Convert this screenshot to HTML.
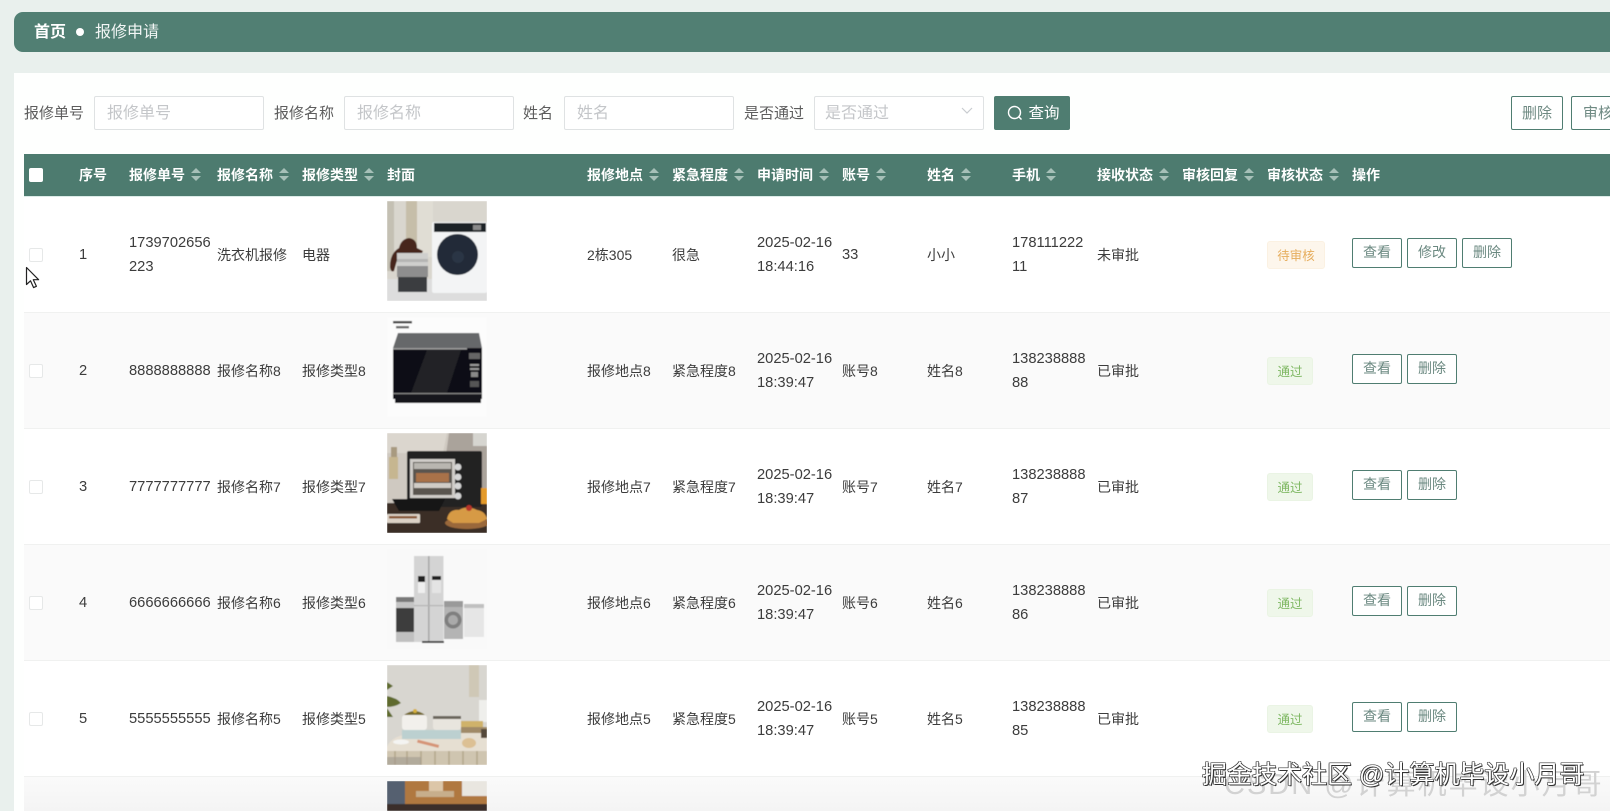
<!DOCTYPE html>
<html lang="zh">
<head>
<meta charset="utf-8">
<title>报修申请</title>
<style>
html,body{margin:0;padding:0;width:1610px;height:811px;overflow:hidden;background:#e9f0ed}
body{position:relative;font-family:"Liberation Sans","Noto Sans CJK SC",sans-serif;color:#333}
.abs,.bc,.panel,.lb,.ip,.btn,.thead,.row,.th,.td,.op,.tag,.cb,.img{position:absolute;box-sizing:border-box}
.bc{left:14px;top:12px;width:1596px;height:40px;background:#517f73;border-radius:9px 0 0 9px;color:#fff}
.bc b{position:absolute;left:20px;top:10px;font-size:16px;line-height:22px}
.bc i{position:absolute;left:62px;top:16px;width:8px;height:8px;border-radius:50%;background:#fff}
.bc span{position:absolute;left:81px;top:10px;font-size:16px;line-height:22px;color:#f2f6f5}
.panel{left:14px;top:73px;width:1596px;height:738px;background:#fefffe}
.lb{top:102px;height:24px;line-height:24px;font-size:15px;color:#5d5d5d;white-space:nowrap}
.ip{top:96px;height:34px;width:170px;border:1px solid #dfe2e3;background:#fff;border-radius:2px;color:#c4c6c9;font-size:16px;line-height:33px;padding-left:12px;white-space:nowrap}
.btn{top:96px;height:34px;border:1px solid #4f7d71;border-radius:2px;background:#fff;color:#6f8a83;font-size:15px;line-height:33px;text-align:center;overflow:hidden;white-space:nowrap}
.thead{left:24px;top:154px;width:1586px;height:43px;background:#4d7b6f;border-bottom:1px solid #dcebe8}
.th{top:0;height:42px;line-height:42px;color:#fff;font-size:14px;font-weight:bold;white-space:nowrap;margin-left:-24px}
.th u{display:inline-block;position:relative;width:10px;height:13px;margin-left:6px;vertical-align:-1px;text-decoration:none}
.th u:before,.th u:after{content:"";position:absolute;left:0;border-left:5px solid transparent;border-right:5px solid transparent}
.th u:before{top:0;border-bottom:5px solid #a6c0b8}
.th u:after{bottom:0;border-top:5px solid #a6c0b8}
.hcb{position:absolute;left:5px;top:14px;width:14px;height:14px;background:#fff;border-radius:2px}
.row{left:24px;width:1586px;height:116px;background:#fff;border-bottom:1px solid #f0f1f0}
.row.e{background:#fafafa}
.td{top:1px;height:116px;display:flex;align-items:center;font-size:14px;line-height:23.6px;color:#3c3c3c;white-space:nowrap;margin-left:-24px}
.n{font-size:14.7px}
.cb{left:5px;top:51px;width:14px;height:14px;border:1px solid #e6e8e8;border-radius:2px;background:#fff}
.op{top:41px;width:50px;height:30px;border:1px solid #4f7d71;border-radius:2px;background:#fff;font-size:14px;line-height:27px;text-align:center;color:#6b8981;margin-left:-24px}
.tag{top:44px;height:28px;margin-left:-24px;left:1267px;border-radius:3px;font-size:12.5px;line-height:28px;text-align:center}
.tag.g{width:46px;background:#eff7ea;border:1px solid #eaf4e4;color:#7fb863}
.tag.o{width:58px;background:#fdf6ec;border:1px solid #fbf1e2;color:#e6ad5c}
.img{left:387px;width:100px;height:100px;overflow:hidden}
.img svg{display:block;width:100px;height:100px}
.wm{position:absolute;white-space:nowrap}
</style>
</head>
<body>
<div class="bc"><b>首页</b><i></i><span>报修申请</span></div>
<div class="panel"></div>

<div class="lb" style="left:24px">报修单号</div>
<div class="ip" style="left:94px">报修单号</div>
<div class="lb" style="left:274px">报修名称</div>
<div class="ip" style="left:344px">报修名称</div>
<div class="lb" style="left:523px">姓名</div>
<div class="ip" style="left:564px">姓名</div>
<div class="lb" style="left:744px">是否通过</div>
<div class="ip" style="left:814px;padding-left:10px">是否通过
<svg style="position:absolute;right:10px;top:10px" width="12" height="8" viewBox="0 0 12 8"><path d="M1 1l5 5 5-5" fill="none" stroke="#c9ccd0" stroke-width="1.2"/></svg></div>
<div class="btn" style="left:994px;width:76px;background:#4f7d71;color:#fff;padding-left:24px;font-size:15.5px">查询
<svg style="position:absolute;left:12px;top:8px" width="16" height="16" viewBox="0 0 16 16"><circle cx="7.5" cy="7.5" r="6" fill="none" stroke="#fff" stroke-width="1.4"/><path d="M12 12l2.5 2.5" stroke="#fff" stroke-width="1.4"/></svg></div>
<div class="btn" style="left:1511px;width:52px">删除</div>
<div class="btn" style="left:1571px;width:39px;border-right:0;border-radius:2px 0 0 2px;text-align:left;padding-left:11px">审核</div>

<div class="thead">
  <div class="hcb"></div>
  <div class="th" style="left:79px">序号</div>
  <div class="th" style="left:129px">报修单号<u></u></div>
  <div class="th" style="left:217px">报修名称<u></u></div>
  <div class="th" style="left:302px">报修类型<u></u></div>
  <div class="th" style="left:387px">封面</div>
  <div class="th" style="left:587px">报修地点<u></u></div>
  <div class="th" style="left:672px">紧急程度<u></u></div>
  <div class="th" style="left:757px">申请时间<u></u></div>
  <div class="th" style="left:842px">账号<u></u></div>
  <div class="th" style="left:927px">姓名<u></u></div>
  <div class="th" style="left:1012px">手机<u></u></div>
  <div class="th" style="left:1097px">接收状态<u></u></div>
  <div class="th" style="left:1182px">审核回复<u></u></div>
  <div class="th" style="left:1267px">审核状态<u></u></div>
  <div class="th" style="left:1352px">操作</div>
</div>

<!-- row 1 -->
<div class="row" style="top:197px">
  <div class="cb"></div>
  <div class="td n" style="left:79px">1</div>
  <div class="td n" style="left:129px">1739702656<br>223</div>
  <div class="td" style="left:217px">洗衣机报修</div>
  <div class="td" style="left:302px">电器</div>
  <div class="td" style="left:587px">2栋305</div>
  <div class="td" style="left:672px">很急</div>
  <div class="td n" style="left:757px">2025-02-16<br>18:44:16</div>
  <div class="td n" style="left:842px">33</div>
  <div class="td" style="left:927px">小小</div>
  <div class="td n" style="left:1012px">178111222<br>11</div>
  <div class="td" style="left:1097px">未审批</div>
  <div class="tag o">待审核</div>
  <div class="op" style="left:1352px">查看</div>
  <div class="op" style="left:1407px">修改</div>
  <div class="op" style="left:1462px">删除</div>
</div>
<!-- row 2 -->
<div class="row e" style="top:313px">
  <div class="cb"></div>
  <div class="td n" style="left:79px">2</div>
  <div class="td n" style="left:129px">8888888888</div>
  <div class="td" style="left:217px">报修名称8</div>
  <div class="td" style="left:302px">报修类型8</div>
  <div class="td" style="left:587px">报修地点8</div>
  <div class="td" style="left:672px">紧急程度8</div>
  <div class="td n" style="left:757px">2025-02-16<br>18:39:47</div>
  <div class="td" style="left:842px">账号8</div>
  <div class="td" style="left:927px">姓名8</div>
  <div class="td n" style="left:1012px">138238888<br>88</div>
  <div class="td" style="left:1097px">已审批</div>
  <div class="tag g">通过</div>
  <div class="op" style="left:1352px">查看</div>
  <div class="op" style="left:1407px">删除</div>
</div>
<!-- row 3 -->
<div class="row" style="top:429px">
  <div class="cb"></div>
  <div class="td n" style="left:79px">3</div>
  <div class="td n" style="left:129px">7777777777</div>
  <div class="td" style="left:217px">报修名称7</div>
  <div class="td" style="left:302px">报修类型7</div>
  <div class="td" style="left:587px">报修地点7</div>
  <div class="td" style="left:672px">紧急程度7</div>
  <div class="td n" style="left:757px">2025-02-16<br>18:39:47</div>
  <div class="td" style="left:842px">账号7</div>
  <div class="td" style="left:927px">姓名7</div>
  <div class="td n" style="left:1012px">138238888<br>87</div>
  <div class="td" style="left:1097px">已审批</div>
  <div class="tag g">通过</div>
  <div class="op" style="left:1352px">查看</div>
  <div class="op" style="left:1407px">删除</div>
</div>
<!-- row 4 -->
<div class="row e" style="top:545px">
  <div class="cb"></div>
  <div class="td n" style="left:79px">4</div>
  <div class="td n" style="left:129px">6666666666</div>
  <div class="td" style="left:217px">报修名称6</div>
  <div class="td" style="left:302px">报修类型6</div>
  <div class="td" style="left:587px">报修地点6</div>
  <div class="td" style="left:672px">紧急程度6</div>
  <div class="td n" style="left:757px">2025-02-16<br>18:39:47</div>
  <div class="td" style="left:842px">账号6</div>
  <div class="td" style="left:927px">姓名6</div>
  <div class="td n" style="left:1012px">138238888<br>86</div>
  <div class="td" style="left:1097px">已审批</div>
  <div class="tag g">通过</div>
  <div class="op" style="left:1352px">查看</div>
  <div class="op" style="left:1407px">删除</div>
</div>
<!-- row 5 -->
<div class="row" style="top:661px">
  <div class="cb"></div>
  <div class="td n" style="left:79px">5</div>
  <div class="td n" style="left:129px">5555555555</div>
  <div class="td" style="left:217px">报修名称5</div>
  <div class="td" style="left:302px">报修类型5</div>
  <div class="td" style="left:587px">报修地点5</div>
  <div class="td" style="left:672px">紧急程度5</div>
  <div class="td n" style="left:757px">2025-02-16<br>18:39:47</div>
  <div class="td" style="left:842px">账号5</div>
  <div class="td" style="left:927px">姓名5</div>
  <div class="td n" style="left:1012px">138238888<br>85</div>
  <div class="td" style="left:1097px">已审批</div>
  <div class="tag g">通过</div>
  <div class="op" style="left:1352px">查看</div>
  <div class="op" style="left:1407px">删除</div>
</div>
<!-- row 6 -->
<div class="row e" style="top:777px;height:34px;background:linear-gradient(#fafafa,#f4f4f4);border-bottom:0"></div>

<svg width="0" height="0" style="position:absolute;left:0;top:0"><filter id="s"><feGaussianBlur stdDeviation="0.6"/></filter></svg>

<!-- image 1 -->
<div class="img" style="top:201px"><svg viewBox="0 0 100 100"><g filter="url(#s)">
<rect width="100" height="100" fill="#d9d6ce"/>
<rect x="19" width="11" height="52" fill="#c6bea9"/><rect x="30" width="16" height="56" fill="#e0ddd4"/><rect x="0" width="7" height="70" fill="#c4c0b3"/>
<rect y="78" width="100" height="22" fill="#dddddd"/>
<path d="M3 66Q3 52 12 47Q14 38 22 37Q30 38 30 47L36 50L34 54L11 56L7 70Q4 72 3 66Z" fill="#47281b"/>
<rect x="10" y="52" width="31" height="13" fill="#cfcfcd"/><rect x="10" y="58" width="31" height="3" fill="#b5b5b3"/>
<rect x="10" y="65" width="31" height="11" fill="#8e8e8e"/><rect x="11" y="76" width="29" height="15" fill="#3a3d40"/>
<rect x="45" y="21" width="55" height="71" rx="2" fill="#f3f4f5"/>
<rect x="47" y="22" width="52" height="9" fill="#1e2125"/><rect x="86" y="24" width="8" height="5" fill="#8a8a8a"/>
<circle cx="70.5" cy="53.5" r="20.5" fill="#222b38"/><circle cx="71" cy="56" r="6" fill="#2c3644"/>
</g></svg></div>

<!-- image 2 -->
<div class="img" style="top:317px"><svg viewBox="0 0 100 100"><g filter="url(#s)">
<rect width="100" height="100" fill="#fcfcfc"/>
<path d="M6 31L11 16H92L95 31Z" fill="#66676a"/>
<rect x="6" y="31" width="89" height="51" fill="#0f0f12"/>
<path d="M40 33H74L60 76H24Z" fill="#232428"/>
<rect x="6" y="31" width="74" height="1.6" fill="#9a9a9a"/>
<rect x="6" y="76" width="89" height="1.2" fill="#888"/>
<rect x="8" y="78" width="86" height="8" fill="#18181b"/>
<rect x="82" y="36" width="11" height="6" fill="#666"/><rect x="83" y="47" width="9" height="2" fill="#999"/><rect x="83" y="51" width="9" height="2" fill="#999"/><rect x="84" y="55" width="7" height="5" fill="#888"/><rect x="83" y="64" width="9" height="6" fill="#555"/>
<rect x="6" y="4" width="19" height="2.4" fill="#444"/><rect x="9" y="9" width="13" height="2.4" fill="#666"/>
</g></svg></div>

<!-- image 3 -->
<div class="img" style="top:433px"><svg viewBox="0 0 100 100"><g filter="url(#s)">
<rect width="100" height="72" fill="#cfc9c1"/>
<path d="M62 0H100V72H52Z" fill="#aaa39b"/><path d="M0 0H60L56 20H0Z" fill="#dbd6ce"/>
<rect x="86" y="0" width="14" height="13" fill="#d6d5d0"/>
<rect x="4" y="14" width="6" height="10" fill="#a89a80"/><rect x="2" y="24" width="9" height="22" fill="#c6b690"/>
<rect y="70" width="100" height="30" fill="#3b2e28"/>
<rect x="20" y="18" width="75" height="56" rx="2" fill="#232324"/>
<rect x="23" y="26" width="45" height="39" fill="#cfccc8"/><rect x="26" y="29" width="39" height="33" fill="#5a5550"/>
<rect x="27" y="30" width="37" height="6" fill="#b9b6b0"/>
<rect x="29" y="40" width="33" height="9" fill="#a9724a"/><rect x="27" y="50" width="37" height="5" fill="#d0ccc6"/>
<circle cx="71" cy="34" r="3.4" fill="#d6d6d6"/><circle cx="71" cy="44" r="3.4" fill="#d6d6d6"/><circle cx="71" cy="53" r="3.4" fill="#d6d6d6"/><circle cx="71" cy="63" r="3.4" fill="#d6d6d6"/>
<path d="M5 66H58L52 78H12Z" fill="#141414"/>
<rect x="94" y="55" width="6" height="16" fill="#e49a2c"/>
<rect x="0" y="81" width="33" height="9" rx="1" fill="#dcd2c6"/><rect x="2" y="83" width="28" height="2.5" fill="#8a5a38"/>
<ellipse cx="80" cy="90" rx="22" ry="6" fill="#9a683a"/>
<path d="M60 86Q62 76 72 77Q80 72 90 77Q98 78 100 86L92 90H66Z" fill="#d69a45"/>
<circle cx="82" cy="75" r="3" fill="#b8342a"/>
</g></svg></div>

<!-- image 4 -->
<div class="img" style="top:549px"><svg viewBox="0 0 100 100"><g filter="url(#s)">
<rect width="100" height="100" fill="#f9f9f9"/>
<rect x="27" y="7" width="29.5" height="86" fill="#d4d4d4"/><rect x="41" y="7" width="1.6" height="86" fill="#a8a8a8"/>
<rect x="27" y="56" width="29.5" height="1.2" fill="#b4b4b4"/>
<rect x="31" y="27" width="7" height="6" fill="#222"/><rect x="31" y="33" width="7" height="11" fill="#efefef"/>
<rect x="45" y="27" width="9" height="4" fill="#222"/><rect x="45" y="31" width="9" height="13" fill="#e4e4e4"/>
<rect x="9" y="48" width="18" height="5" fill="#7a7a7a"/><rect x="9" y="53" width="18" height="6" fill="#c4c4c4"/><rect x="9" y="59" width="18" height="24" fill="#3c3c3e"/><rect x="9" y="83" width="18" height="10" fill="#c0c0c0"/>
<rect x="57" y="52" width="19" height="38" fill="#b4b4b4"/><rect x="57" y="52" width="19" height="6" fill="#9a9a9a"/><circle cx="66" cy="71" r="8.5" fill="#7f7f7f"/><circle cx="66" cy="71" r="5" fill="#aaa"/>
<rect x="77" y="55" width="20" height="33" fill="#e6e6e6"/><rect x="77" y="55" width="20" height="4" fill="#c0c0c0"/>
<rect x="35" y="92" width="22" height="2" fill="#3a3a3a"/>
</g></svg></div>

<!-- image 5 -->
<div class="img" style="top:665px"><svg viewBox="0 0 100 100"><g filter="url(#s)">
<rect width="100" height="100" fill="#d8d6d0"/>
<rect x="82" y="0" width="10" height="32" fill="#cfc8b6"/>
<rect x="92" y="35" width="8" height="22" fill="#efefec"/>
<path d="M0 17L6 21L0 25ZM0 31Q10 33 14 38Q8 42 0 42ZM0 43L6 52L0 52Z" fill="#5e6b2e"/>
<path d="M0 82Q4 70 28 68H100V100H0Z" fill="#e6dfd2"/>
<rect y="86" width="100" height="14" fill="#cfc5b0"/>
<path d="M8 86v14M20 86v14M34 86v14M48 86v14M62 86v14M76 86v14M90 86v14" stroke="#b5a98f" stroke-width="1.6"/>
<rect x="15" y="50" width="25" height="15" rx="3" fill="#f2f0ec"/>
<path d="M17 50Q28 42 38 50Z" fill="#74692f"/><circle cx="28" cy="46" r="2" fill="#d6b03c"/>
<rect x="46" y="52" width="28" height="13" rx="3" fill="#e8e5de"/><rect x="46" y="51" width="28" height="3" fill="#6a665c"/>
<rect x="15" y="65" width="59" height="9" fill="#bcd0d0"/>
<rect x="74" y="56" width="22" height="6" fill="#cfb26a"/><rect x="74" y="62" width="26" height="6" fill="#a08a68"/><rect x="94" y="64" width="6" height="9" fill="#55493a"/>
<ellipse cx="82" cy="78" rx="7" ry="5" fill="#dcc094"/>
<rect x="30" y="77" width="22" height="3" transform="rotate(14 40 79)" fill="#d69477"/>
<ellipse cx="14" cy="77" rx="8" ry="2.5" fill="#f4f4f2"/>
<rect x="0" y="92" width="34" height="8" fill="#9b968c" opacity=".55"/>
</g></svg></div>

<!-- image 6 -->
<div class="img" style="top:781px;height:30px"><svg viewBox="0 0 100 30" style="height:30px"><g filter="url(#s)">
<rect width="100" height="30" fill="#b0783f"/>
<rect width="18" height="30" fill="#55606f"/>
<rect x="75" width="25" height="15" fill="#e9e6e0"/>
<rect x="42" width="14" height="10" fill="#dcc6a8"/><rect x="29" y="10" width="38" height="6" fill="#c7ae8c"/>
<rect y="23" width="100" height="7" fill="#3a2f2a"/>
</g></svg></div>

<!-- cursor -->
<svg class="abs" style="left:25px;top:266px" width="16" height="24" viewBox="0 0 16 24"><path d="M1.5 1.5V18.5L5.5 14.8L8.6 21.6L11.4 20.3L8.3 13.7H13.6Z" fill="#fff" stroke="#222" stroke-width="1.2" stroke-linejoin="round"/></svg>

<!-- watermarks -->
<div class="wm" style="left:1224px;top:768px;font-size:29px;line-height:34px;color:#d2d2d2;letter-spacing:2px">CSDN @计算机毕设小月哥</div>
<div class="wm" style="left:1202px;top:759px;font-size:25px;line-height:32px;color:#fff;text-shadow:1px 1px 0 #333,-.6px .6px 0 #333,.6px -.6px 0 #333,-.6px -.6px 0 #333">掘金技术社区 @计算机毕设小月哥</div>
</body>
</html>
